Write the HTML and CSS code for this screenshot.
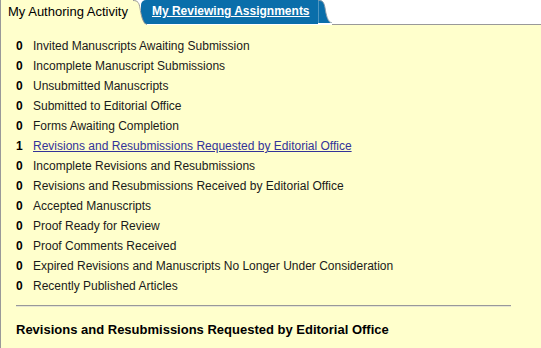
FILE: index.html
```html
<!DOCTYPE html>
<html lang="en">
<head>
  <meta charset="UTF-8" />
  <title>Author Dashboard</title>
  <link rel="stylesheet" href="styles.css">
</head>
<body>
  <div class="tabs">
    <div class="tab active">
      <span class="tab-label">My Authoring Activity</span>
      <svg class="ear" width="14" height="25" viewBox="0 0 14 25">
        <path d="M0 0 C5 0 6 3 7 8 C8 15 10 24 14 25 L0 25 Z" fill="#ffffcc"/>
        <path d="M0 0.5 C5 0.5 6 3 7 8 C8 15 10 24 14 24.5" fill="none" stroke="#999" stroke-width="1"/>
      </svg>
    </div>
    <div class="tab other">
      <a href="#" class="tab-label">My Reviewing Assignments</a>
      <svg class="ear" width="14" height="25" viewBox="0 0 14 25">
        <path d="M0 0 C5 0 6 3 7 8 C8 15 10 24 14 24 L0 24 Z" fill="#0a6eaa"/>
        <path d="M0 0.5 C5 0.5 6 3 7 8 C8 15 10 23.5 14 23.5" fill="none" stroke="#8a9aa6" stroke-width="1"/>
      </svg>
    </div>
  </div>

  <div class="panel">
    <ul class="counts">
      <li><b>0</b><span>Invited Manuscripts Awaiting Submission</span></li>
      <li><b>0</b><span>Incomplete Manuscript Submissions</span></li>
      <li><b>0</b><span>Unsubmitted Manuscripts</span></li>
      <li><b>0</b><span>Submitted to Editorial Office</span></li>
      <li><b>0</b><span>Forms Awaiting Completion</span></li>
      <li><b>1</b><a href="#">Revisions and Resubmissions Requested by Editorial Office</a></li>
      <li><b>0</b><span>Incomplete Revisions and Resubmissions</span></li>
      <li><b>0</b><span>Revisions and Resubmissions Received by Editorial Office</span></li>
      <li><b>0</b><span>Accepted Manuscripts</span></li>
      <li><b>0</b><span>Proof Ready for Review</span></li>
      <li><b>0</b><span>Proof Comments Received</span></li>
      <li><b>0</b><span>Expired Revisions and Manuscripts No Longer Under Consideration</span></li>
      <li><b>0</b><span>Recently Published Articles</span></li>
    </ul>
    <hr class="divider">
    <h2>Revisions and Resubmissions Requested by Editorial Office</h2>
  </div>
</body>
</html>
```

FILE: styles.css
```css
* {
  box-sizing: border-box;
}

body {
  margin: 0;
  font-family: "Liberation Sans", Arial, sans-serif;
  font-size: 12px;
  color: #1a1a1a;
  background: #fff;
}

.tabs {
  display: flex;
  height: 25px;
  position: relative;
  z-index: 1;
}

.tab {
  display: flex;
  height: 25px;
}

.tab-label {
  display: flex;
  align-items: center;
  font-size: 13px;
}

.tab.active {
  position: relative;
  z-index: 2;
}

.tab.active .tab-label {
  padding: 0 5px 2px 7px;
  background: #ffffcc;
  border-left: 1px solid #999;
  color: #000;
}

.tab.other {
  margin-left: -6px;
  height: 24px;
}

.tab.other .tab-label {
  height: 24px;
  padding: 0 8px 2px 11px;
  background: #0a6eaa;
  border-top-left-radius: 5px;
  color: #fff;
  font-size: 12px;
  font-weight: bold;
  text-decoration: underline;
}

.tab.other .ear {
  height: 24px;
}

.tabs::after {
  content: "";
  flex: 1;
  align-self: flex-end;
  border-bottom: 1px solid #999;
}

.panel {
  background: #ffffcc;
  border-left: 1px solid #999;
  height: 323px;
  padding: 11px 0 0 15px;
}

.counts {
  list-style: none;
  margin: 0;
  padding: 0;
}

.counts li {
  display: flex;
  line-height: 20px;
}

.counts b {
  width: 17px;
  color: #000;
}

.counts a {
  color: #333399;
}

.divider {
  margin: 9px 30px 0 0;
  border: 0;
  border-top: 1px solid #999;
  border-bottom: 1px solid #e6e6d0;
  height: 0;
}

h2 {
  margin: 15px 0 0;
  font-size: 13px;
  color: #000;
}
```
